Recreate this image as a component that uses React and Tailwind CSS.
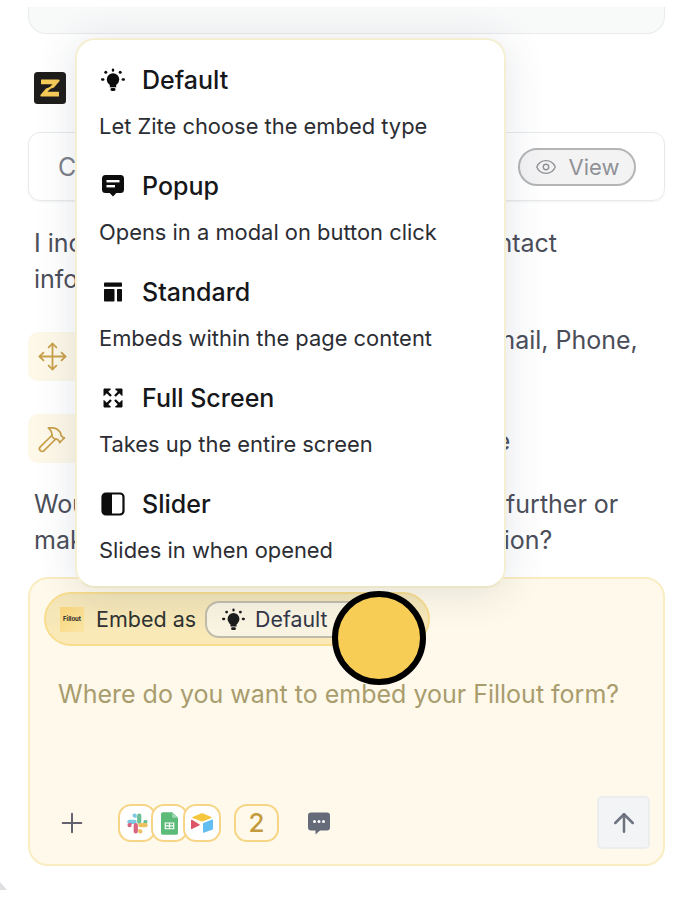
import React from 'react'
import { ArrowUp, Eye, Hammer, Move, Plus } from 'lucide-react'

const BulbIcon = ({ className }) => (
  <svg viewBox="0 0 24 24" className={className} fill="currentColor">
    <circle cx="12" cy="11.500" r="6.200" />
    <rect x="8.800" y="15.500" width="6.400" height="3.800" />
    <rect x="9.500" y="20" width="5" height="3" rx="1.400" />
    <rect x="10.800" y="0.500" width="2.400" height="3.200" rx="1.200" />
    <rect x="0" y="10.300" width="3.400" height="2.400" rx="1.200" />
    <rect x="20.600" y="10.300" width="3.400" height="2.400" rx="1.200" />
    <circle cx="4.800" cy="4.300" r="1.500" />
    <circle cx="19.200" cy="4.300" r="1.500" />
  </svg>
)

const PopupIcon = ({ className }) => (
  <svg viewBox="0 0 24 24" className={className}>
    <path fill="currentColor" d="M4.500 1h15A3.500 3.500 0 0 1 23 4.500v11a3.500 3.500 0 0 1-3.500 3.500h-4.200L12 22.500 8.700 19H4.500A3.500 3.500 0 0 1 1 15.500v-11A3.500 3.500 0 0 1 4.500 1z" />
    <rect x="5.500" y="6" width="13" height="2.400" fill="#fff" />
    <rect x="5.500" y="11" width="8.500" height="2.400" fill="#fff" />
  </svg>
)

const StandardIcon = ({ className }) => (
  <svg viewBox="0 0 24 24" className={className} fill="currentColor">
    <rect x="3" y="2.500" width="18" height="4.200" rx="0.800" />
    <rect x="3" y="9" width="10.500" height="12.500" rx="0.800" />
    <rect x="16" y="9" width="5" height="12.500" rx="0.800" />
  </svg>
)

const FullScreenIcon = ({ className }) => (
  <svg viewBox="0 0 24 24" className={className} fill="currentColor" stroke="currentColor" strokeWidth="1">
    <path d="M3 3h6.500L3 9.500z" />
    <path d="M21 3h-6.500L21 9.500z" />
    <path d="M3 21h6.500L3 14.500z" />
    <path d="M21 21h-6.500L21 14.500z" />
    <path d="M5 5l5 5M19 5l-5 5M5 19l5-5M19 19l-5-5" strokeWidth="2.400" />
  </svg>
)

const SliderIcon = ({ className }) => (
  <svg viewBox="0 0 24 24" className={className}>
    <rect x="1.500" y="1.500" width="21" height="21" rx="3.500" fill="none" stroke="currentColor" strokeWidth="2.200" />
    <path d="M4.500 1.500H11v21H4.500a3 3 0 0 1-3-3v-15a3 3 0 0 1 3-3z" fill="currentColor" />
  </svg>
)

const ZiteLogo = () => (
  <svg viewBox="0 0 32 32" className="h-[32px] w-[32px]">
    <rect width="32" height="32" rx="3.500" fill="#1f1d1b" />
    <path d="M7 7.500h17.500c1 0 1.500 1 .9 1.800L20 15.500l-7 2.500 5.500-5.800H7z" fill="#f6cc58" />
    <path d="M25 24.500H7.500c-1 0-1.500-1-.9-1.800L12 16.500l7-2.500-5.500 5.800H25z" fill="#f6cc58" />
  </svg>
)

const SlackLogo = () => (
  <svg viewBox="0 0 24 24" className="h-[23px] w-[23px]">
    <path fill="#7cc9e4" d="M9 1.500a2.200 2.200 0 1 0 0 4.400h2.200V3.700A2.200 2.200 0 0 0 9 1.500zM3.500 8a2.200 2.200 0 1 0 0 4.400H9A2.200 2.200 0 1 0 9 8z" />
    <path fill="#6cbf94" d="M22.500 10.200a2.200 2.200 0 1 0-4.400 0v2.200h2.200a2.200 2.200 0 0 0 2.200-2.200zM16 3.700a2.200 2.200 0 1 0-4.400 0v6.500a2.200 2.200 0 1 0 4.400 0z" />
    <path fill="#ecc25f" d="M15 22.500a2.200 2.200 0 1 0 0-4.400h-2.200v2.200a2.200 2.200 0 0 0 2.200 2.200zM20.500 16a2.200 2.200 0 1 0 0-4.400H15a2.200 2.200 0 1 0 0 4.400z" />
    <path fill="#d9647f" d="M1.500 13.800a2.200 2.200 0 1 0 4.400 0v-2.200H3.700a2.200 2.200 0 0 0-2.200 2.200zM8 20.300a2.200 2.200 0 1 0 4.400 0v-6.500a2.200 2.200 0 1 0-4.400 0z" />
  </svg>
)

const SheetsLogo = () => (
  <svg viewBox="0 0 18 24" className="h-[23px] w-[17px]">
    <path fill="#5dbb79" d="M2 0h10l6 6v16a2 2 0 0 1-2 2H2a2 2 0 0 1-2-2V2a2 2 0 0 1 2-2z" />
    <path fill="#a4d9b5" d="M12 0l6 6h-6z" />
    <path fill="none" stroke="#fff" strokeWidth="1.200" d="M4.500 11.500h9v6h-9zM4.500 14.500h9M9 11.500v6" />
  </svg>
)

const AirtableLogo = () => (
  <svg viewBox="0 0 24 24" className="h-[24px] w-[24px]">
    <path fill="#f5c73f" d="M10.800 2.500 2.600 5.900c-.5.200-.5.900 0 1.100l8.300 3.300c.7.300 1.500.3 2.200 0l8.300-3.300c.5-.2.500-.9 0-1.100l-8.200-3.400c-.8-.3-1.600-.3-2.400 0z" />
    <path fill="#62bdf0" d="M13 12.400v8.900c0 .4.400.7.800.5l8.800-3.400c.3-.1.400-.3.400-.6V9c0-.4-.4-.7-.8-.5l-8.800 3.400c-.2.100-.4.300-.4.500z" />
    <path fill="#dc5468" d="M1 9.300v8.200c0 .5.500.8.900.6l7.700-3.800c.4-.2.400-.7 0-.9L1.900 8.700c-.4-.2-.9.100-.9.600z" />
  </svg>
)

const ChatIcon = () => (
  <svg viewBox="0 0 24 24" className="h-[24px] w-[24px]">
    <path fill="#656b78" d="M4 1.500h16a3 3 0 0 1 3 3v12a3 3 0 0 1-3 3h-7l-4.500 4v-4H4a3 3 0 0 1-3-3v-12a3 3 0 0 1 3-3z" />
    <circle cx="7.500" cy="10.500" r="1.500" fill="#fff" />
    <circle cx="12" cy="10.500" r="1.500" fill="#fff" />
    <circle cx="16.500" cy="10.500" r="1.500" fill="#fff" />
  </svg>
)

const embedTypes = [
  { name: 'Default', description: 'Let Zite choose the embed type', Icon: BulbIcon },
  { name: 'Popup', description: 'Opens in a modal on button click', Icon: PopupIcon },
  { name: 'Standard', description: 'Embeds within the page content', Icon: StandardIcon },
  { name: 'Full Screen', description: 'Takes up the entire screen', Icon: FullScreenIcon },
  { name: 'Slider', description: 'Slides in when opened', Icon: SliderIcon },
]

const App = () => {
  return (
    <div className="relative h-[903px] overflow-hidden bg-white pr-[33px] pl-[28px] font-['Inter',sans-serif] text-[25px] leading-[36px] text-[#4b4e59]">
      {/* Card cut off by the top edge */}
      <div className="mt-[7px] h-[27px] rounded-b-[18px] border border-t-0 border-[#e9ebec] bg-[#f8f9f9]" />

      <div className="mt-[38px] pl-[6px]">
        <ZiteLogo />
      </div>

      {/* Created form card */}
      <div className="mt-[28px] flex h-[69px] items-center justify-between rounded-[12px] border border-[#e8e9eb] pr-[28px] pl-[29px] shadow-[0_1px_2px_rgba(0,0,0,0.05)]">
        <span className="text-[#7d808a]">Contact Form</span>
        <button className="flex h-[38px] w-[118px] items-center justify-center gap-[12px] rounded-full border-2 border-[#b4b5b7] bg-[#f3f3f4] text-[22px] text-[#8f9197]">
          <Eye className="h-[22px] w-[22px]" strokeWidth={1.500} />
          View
        </button>
      </div>

      <p className="mt-[24px] whitespace-nowrap pl-[6px]">
        I included a short form with the core contact
        <br />
        information fields
      </p>

      {/* Change list */}
      <div className="mt-[25px] flex h-[72px] items-start">
        <div className="mt-[10px] flex h-[49px] w-[60px] shrink-0 items-center justify-center rounded-[10px] bg-[#fdf8e8] pr-[12px]">
          <Move className="h-[31px] w-[31px] text-[#c9a04a]" strokeWidth={1.400} />
        </div>
        <p className="whitespace-nowrap pl-[185px]">
          Fields are Name, Email, Phone,
          <br />
          Message
        </p>
      </div>
      <div className="mt-[20px] flex h-[49px] items-center">
        <div className="flex h-[49px] w-[60px] shrink-0 items-center justify-center rounded-[10px] bg-[#fdf8e8] pr-[12px]">
          <Hammer className="h-[30px] w-[30px] text-[#c9a04a]" strokeWidth={1.400} />
        </div>
        <p className="whitespace-nowrap pt-[5px] pl-[67px]">Built it to match your site style</p>
      </div>

      <p className="mt-[23px] whitespace-nowrap pl-[6px]">
        Would you like me to update the design further or
        <br />
        make changes to a specific field or section?
      </p>

      {/* Composer */}
      <div className="mt-[19px] flex h-[289px] flex-col rounded-[20px] border-2 border-[#faedc2] bg-[#fef9ea] pr-[13px] pl-[14px] pt-[13px]">
        <div className="flex h-[54px] w-[386px] items-center rounded-full border-2 border-[#f9dd8e] bg-gradient-to-b from-[#f3e5b9] to-[#fbeab7] pl-[14px]">
          <div className="flex h-[25px] w-[24px] items-center justify-center bg-gradient-to-br from-[#f9d57a] to-[#fbe5a5]">
            <span className="text-[6px] leading-none font-bold text-[#2a2a2a]">Fillout</span>
          </div>
          <span className="ml-[12px] text-[21.500px] text-[#2f3331]">Embed as</span>
          <button className="ml-[9px] flex h-[37px] w-[170px] items-center gap-[10px] rounded-[14px] border-2 border-[#c0bcab] bg-[#f9f3e1] pl-[15px] text-[21.300px] text-[#333647]">
            <BulbIcon className="h-[23px] w-[23px] text-[#1d1d1d]" />
            Default
          </button>
        </div>

        <p className="mt-[30px] whitespace-nowrap pl-[14px] text-[#a99c6d]">
          Where do you want to embed your Fillout form?
        </p>

        <div className="mt-auto mb-[15px] flex items-end justify-between">
          <div className="mb-[7px] flex items-center">
            <Plus className="ml-[12px] h-[32px] w-[32px] text-[#62636f]" strokeWidth={1.500} />
            <div className="ml-[30px] flex">
              <div className="z-10 flex h-[38px] w-[38px] items-center justify-center rounded-[13px] border-2 border-[#f6d586] bg-white">
                <SlackLogo />
              </div>
              <div className="z-20 -ml-[5px] flex h-[38px] w-[37px] items-center justify-center rounded-[13px] border-2 border-[#f6d586] bg-white">
                <SheetsLogo />
              </div>
              <div className="z-30 -ml-[5px] flex h-[38px] w-[38px] items-center justify-center rounded-[13px] border-2 border-[#f6d586] bg-white">
                <AirtableLogo />
              </div>
            </div>
            <div className="ml-[13px] flex h-[38px] w-[45px] items-center justify-center rounded-[13px] border-2 border-[#f6d586] text-[26px] font-medium text-[#c39a3d]">
              2
            </div>
            <div className="ml-[28px] flex">
              <ChatIcon />
            </div>
          </div>
          <button className="flex h-[53px] w-[53px] items-center justify-center rounded-[5px] border-2 border-[#eceded] bg-[#f3f4f6]">
            <ArrowUp className="h-[30px] w-[30px] text-[#6b7280]" strokeWidth={2} />
          </button>
        </div>
      </div>

      {/* Embed type menu */}
      <div className="absolute top-[38px] left-[75px] flex h-[550px] w-[431px] flex-col gap-[30px] rounded-[20px] border-2 border-[#f5efd2] border-b-[#ece6c8] bg-white pt-[24px] pl-[22px] shadow-[0_4px_40px_rgba(60,70,100,0.14)]">
        {embedTypes.map(({ name, description, Icon }) => (
          <div key={name}>
            <div className="flex h-[32px] items-center gap-[17px] text-[25px] font-medium text-[#16171a]">
              <Icon className="ml-[2px] h-[24px] w-[24px] text-[#0d0d0d]" />
              {name}
            </div>
            <div className="mt-[16px] h-[28px] whitespace-nowrap text-[21.900px] leading-[28px] text-[#2b2d33]">
              {description}
            </div>
          </div>
        ))}
      </div>

      {/* Cursor highlight */}
      <div className="absolute top-[591px] left-[332px] h-[94px] w-[94px] rounded-full border-[6px] border-black bg-[#f7cd55]" />

      <div className="absolute top-[882px] left-0 h-0 w-0 border-r-[7px] border-b-[8px] border-r-transparent border-b-[#dfe0e3]" />
    </div>
  )
}

export default App
